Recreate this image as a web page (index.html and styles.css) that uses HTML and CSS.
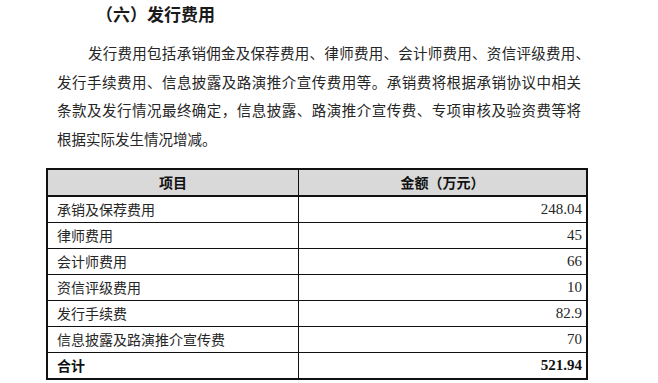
FILE: index.html
```html
<!DOCTYPE html>
<html lang="zh-CN">
<head>
<meta charset="utf-8">
<link rel="stylesheet" href="styles.css">
</head>
<body>
<h2 class="title">（六）发行费用</h2>
<p class="para">
<span class="ln first">发行费用包括承销佣金及保荐费用、律师费用、会计师费用、资信评级费用、</span>
<span class="ln">发行手续费用、信息披露及路演推介宣传费用等。承销费将根据承销协议中相关</span>
<span class="ln">条款及发行情况最终确定，信息披露、路演推介宣传费、专项审核及验资费等将</span>
<span class="ln last">根据实际发生情况增减。</span>
</p>
<table class="fees">
<thead>
<tr><th class="c-item">项目</th><th class="c-amt">金额（万元）</th></tr>
</thead>
<tbody>
<tr><td>承销及保荐费用</td><td class="num">248.04</td></tr>
<tr><td>律师费用</td><td class="num">45</td></tr>
<tr><td>会计师费用</td><td class="num">66</td></tr>
<tr><td>资信评级费用</td><td class="num">10</td></tr>
<tr><td>发行手续费</td><td class="num">82.9</td></tr>
<tr><td>信息披露及路演推介宣传费</td><td class="num">70</td></tr>
<tr class="total"><td>合计</td><td class="num">521.94</td></tr>
</tbody>
</table>
</body>
</html>
```
FILE: styles.css
```css
html, body {
  margin: 0;
  padding: 0;
  background: #ffffff;
}
body {
  font-family: "Liberation Serif", "Noto Sans CJK SC", serif;
  color: #1e1e1e;
  width: 658px;
}
.title {
  margin: 0;
  padding-left: 96px;
  font-family: "Noto Sans CJK SC", sans-serif;
  font-weight: 700;
  font-size: 17px;
  line-height: 27px;
  color: #1a1a1a;
}
.para {
  margin: 12px 0 0 57px;
  width: 524px;
  font-family: "Noto Sans CJK SC", sans-serif;
  font-size: 14.5px;
  line-height: 28.7px;
  color: #262626;
}
.ln {
  display: block;
  text-align: justify;
  text-align-last: justify;
  white-space: nowrap;
}
.ln.first {
  padding-left: 31px;
  margin-right: -9px;
}
.ln.last {
  text-align-last: left;
}
.fees {
  margin: 14px 0 0 46px;
  width: 542px;
  border-collapse: collapse;
  border: 2px solid #111;
  font-size: 14px;
}
.fees th,
.fees td {
  border: 1px solid #111;
  height: 25px;
  padding: 0 4px 0 9px;
  line-height: 20px;
  text-align: left;
  font-family: "Noto Sans CJK SC", sans-serif;
  font-weight: 400;
  color: #262626;
}
.fees thead th {
  background: #d9d9d9;
  text-align: center;
  font-weight: 700;
  height: 25px;
  color: #111;
  padding: 0;
}
.fees .c-item {
  width: 250px;
}
.fees td.num {
  text-align: right;
  font-family: "Liberation Serif", serif;
  font-size: 15px;
}
.fees .total td {
  font-weight: 700;
  color: #111;
}
.fees thead tr {
  border-bottom: 2px solid #111;
}
```
